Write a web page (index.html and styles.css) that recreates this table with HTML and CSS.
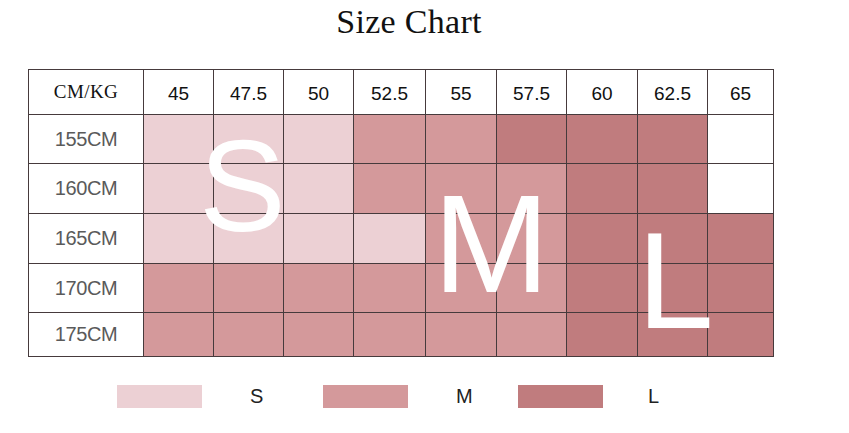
FILE: index.html
```html
<!DOCTYPE html>
<html lang="en">
<head>
    <meta charset="UTF-8">
    <title>Size Chart</title>
    <link rel="stylesheet" href="styles.css">
</head>
<body>

    <h1 class="title">Size Chart</h1>

    <!-- size grid: height rows x weight columns -->
    <div class="chart">
        <div class="grid">
            <div class="cell corner">CM/KG</div>
            <div class="cell head">45</div>
            <div class="cell head">47.5</div>
            <div class="cell head">50</div>
            <div class="cell head">52.5</div>
            <div class="cell head">55</div>
            <div class="cell head">57.5</div>
            <div class="cell head">60</div>
            <div class="cell head">62.5</div>
            <div class="cell head">65</div>

            <div class="cell label">155CM</div>
            <div class="cell s"></div><div class="cell s"></div><div class="cell s"></div>
            <div class="cell m"></div><div class="cell m"></div>
            <div class="cell l"></div><div class="cell l"></div><div class="cell l"></div>
            <div class="cell"></div>

            <div class="cell label">160CM</div>
            <div class="cell s"></div><div class="cell s"></div><div class="cell s"></div>
            <div class="cell m"></div><div class="cell m"></div><div class="cell m"></div>
            <div class="cell l"></div><div class="cell l"></div>
            <div class="cell"></div>

            <div class="cell label">165CM</div>
            <div class="cell s"></div><div class="cell s"></div><div class="cell s"></div><div class="cell s"></div>
            <div class="cell m"></div><div class="cell m"></div>
            <div class="cell l"></div><div class="cell l"></div><div class="cell l"></div>

            <div class="cell label">170CM</div>
            <div class="cell m"></div><div class="cell m"></div><div class="cell m"></div>
            <div class="cell m"></div><div class="cell m"></div><div class="cell m"></div>
            <div class="cell l"></div><div class="cell l"></div><div class="cell l"></div>

            <div class="cell label">175CM</div>
            <div class="cell m"></div><div class="cell m"></div><div class="cell m"></div>
            <div class="cell m"></div><div class="cell m"></div><div class="cell m"></div>
            <div class="cell l"></div><div class="cell l"></div><div class="cell l"></div>
        </div>

        <!-- big size letters laid over the grid -->
        <span class="big big-s">S</span>
        <span class="big big-m">M</span>
        <span class="big big-l">L</span>
    </div>

    <div class="legend">
        <div class="swatch s"></div>
        <div class="legend-label">S</div>
        <div class="swatch m"></div>
        <div class="legend-label">M</div>
        <div class="swatch l"></div>
        <div class="legend-label">L</div>
    </div>

</body>
</html>
```

FILE: styles.css
```css
/* Basic styling */
body {
    margin: 0;
    background-color: #fff;
    font-family: "Liberation Sans", Arial, sans-serif;
}
.title {
    margin: 2px 0 27px;
    padding-right: 31px;
    font-family: "Liberation Serif", "Times New Roman", serif;
    font-weight: normal;
    font-size: 34px;
    line-height: 40px;
    letter-spacing: 0.3px;
    color: #111;
    text-align: center;
}

/* Chart grid */
.chart {
    position: relative;
    width: 746px;
    margin-left: 28px;
}
.grid {
    display: grid;
    grid-template-columns: 114px 69px 69px 69px 71px 70px 69px 70px 69px 65px;
    grid-template-rows: 44px 48px 49px 49px 48px 43px;
    gap: 1px;
    padding: 1px;
    background-color: #463a3c;
}
.cell {
    background-color: #fff;
    display: flex;
    align-items: center;
    justify-content: center;
}
.corner {
    font-family: "Liberation Serif", "Times New Roman", serif;
    font-size: 19px;
    letter-spacing: 0.4px;
    color: #111;
}
.head {
    font-size: 19px;
    color: #111;
    padding-top: 4px;
}
.label {
    font-size: 20px;
    letter-spacing: -0.4px;
    color: #5a5a5a;
}
.s { background-color: #ecd0d4; }
.m { background-color: #d4999b; }
.l { background-color: #c07c7e; }

/* Big letters */
.big {
    position: absolute;
    color: #fff;
    line-height: 1;
}
.big-s {
    font-size: 130px;
    left: 171px;
    top: 52px;
}
.big-m {
    font-size: 140px;
    left: 405px;
    top: 105px;
}
.big-l {
    font-size: 138px;
    left: 609px;
    top: 142px;
}

/* Legend */
.legend {
    display: grid;
    grid-template-columns: 85px 121px 85px 110px 85px 100px;
    align-items: center;
    margin: 28px 0 0 117px;
}
.swatch {
    height: 23px;
}
.legend-label {
    padding-left: 48px;
    font-size: 20px;
    color: #222;
}
.legend-label:last-child {
    padding-left: 45px;
}
```
